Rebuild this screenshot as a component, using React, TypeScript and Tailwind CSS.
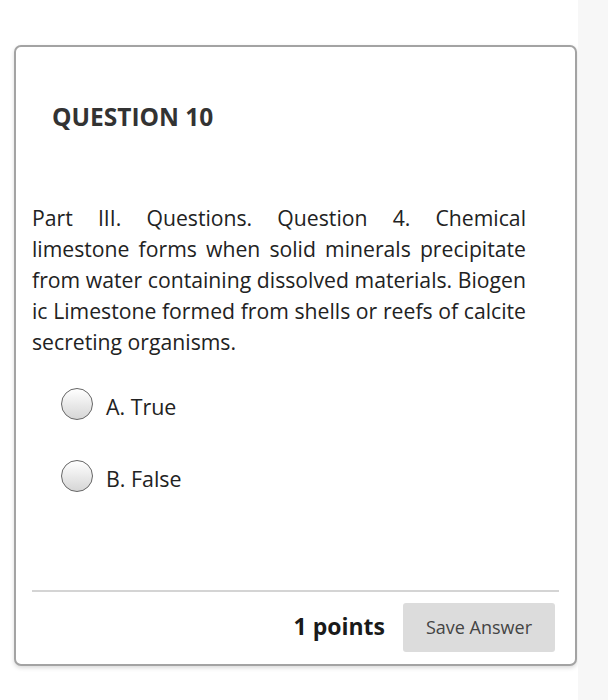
// Question card: title, prompt, true/false choices, footer with points + save.
const choices = ["A. True", "B. False"];

// prompt lines as laid out in the original (last line is not justified)
const promptLines = [
  "Part III. Questions. Question 4. Chemical",
  "limestone forms when solid minerals precipitate",
  "from water containing dissolved materials. Biogen",
  "ic Limestone formed from shells or reefs of calcite",
];

function Radio() {
  return (
    <span className="h-[32px] w-[32px] flex-none rounded-full border-[1.5px] border-[#666] bg-gradient-to-b from-white to-[#d6d6d6]" />
  );
}

export default function App() {
  return (
    <div className="flex h-[700px] w-[608px] bg-white font-['Open_Sans',sans-serif] text-[#222]">
      <div className="w-[578px] flex-none pl-[14px] pt-[45px]">
        <div className="flex h-[621px] w-[563px] flex-col rounded-[7px] border-2 border-[#a3a3a3] bg-white shadow-[0_2px_4px_rgba(0,0,0,0.15)]">
          <h2 className="pl-[36px] pt-[55px] text-[24.5px] font-bold leading-[30px] text-[#333]">QUESTION 10</h2>
          <p className="ml-[16px] mt-[70px] w-[494px] text-[21.2px] leading-[31px]">
            {promptLines.map((l) => (
              <span key={l} className="block whitespace-nowrap text-justify [text-align-last:justify]">
                {l}
              </span>
            ))}
            <span className="block">secreting organisms.</span>
          </p>
          <div className="mt-[28px] flex flex-col gap-[34px] pl-[45px]">
            {choices.map((c) => (
              <label key={c} className="flex items-center gap-[13px] text-[21.4px] leading-[32px]">
                <Radio />
                <span className="pt-[6px]">{c}</span>
              </label>
            ))}
          </div>
          <div className="mx-[16px] mt-auto flex items-center justify-end gap-[18px] border-t-2 border-[#d4d4d4] pb-[12px] pr-[4px] pt-[11px]">
            <span className="pb-[3px] text-[23px] font-bold text-[#1a1a1a]">1 points</span>
            <button className="h-[49px] w-[152px] rounded-[3px] bg-[#dcdcdc] text-[18px] text-[#444]">Save Answer</button>
          </div>
        </div>
      </div>
      <div className="flex-1 bg-[#f7f7f7]" />
    </div>
  );
}
